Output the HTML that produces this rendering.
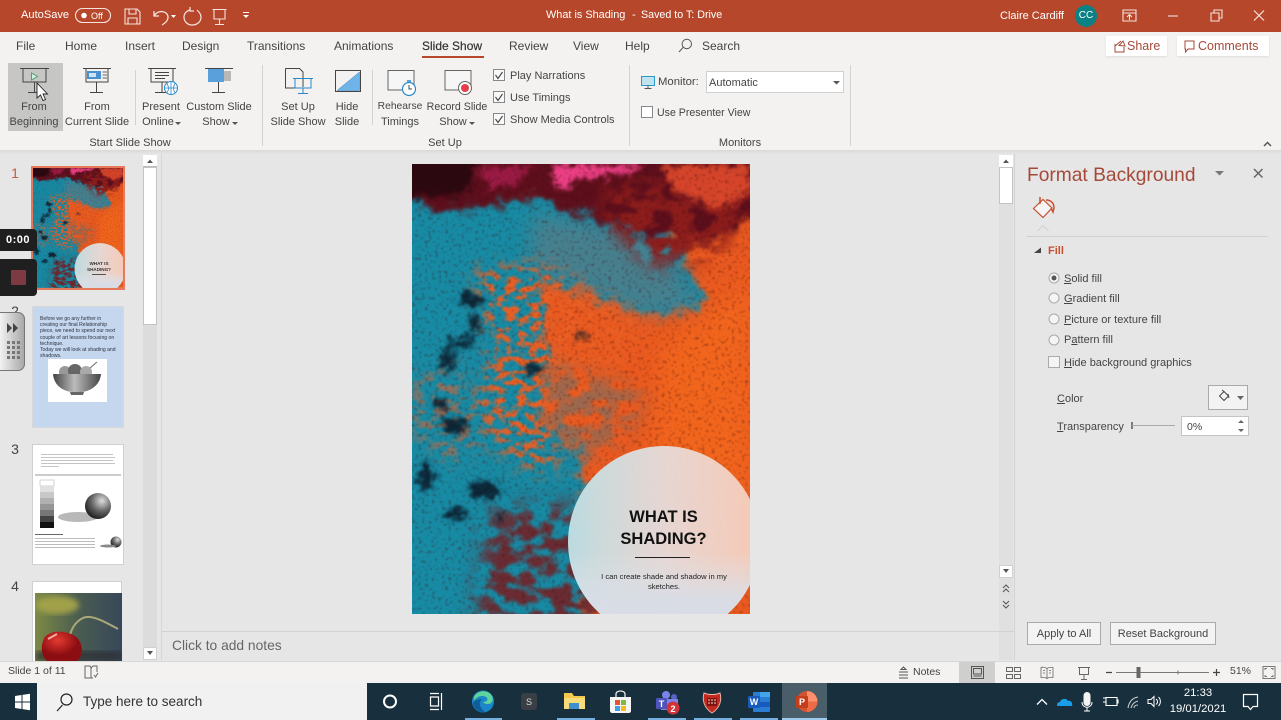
<!DOCTYPE html>
<html lang="en"><head><meta charset="utf-8"><title>What is Shading</title>
<style>
html,body{margin:0;padding:0;width:1281px;height:720px;overflow:hidden;background:#e6e6e6}
body{font-family:"Liberation Sans",sans-serif;font-size:12px;color:#444;position:relative}
.b{position:absolute}
.t{position:absolute;white-space:nowrap;line-height:14px}
.c{transform:translateX(-50%);text-align:center}
.w{color:#fff}
.r{font-size:11px}
u{text-decoration:underline;text-underline-offset:1px}
</style></head><body>

<svg width="0" height="0" style="position:absolute">
<defs>
<filter id="rough" x="-10%" y="-10%" width="120%" height="120%" color-interpolation-filters="sRGB"><feGaussianBlur in="SourceGraphic" stdDeviation="4" result="s"/><feTurbulence type="fractalNoise" baseFrequency=".06" numOctaves="3" seed="4" result="n"/><feDisplacementMap in="s" in2="n" scale="34" xChannelSelector="R" yChannelSelector="G"/><feGaussianBlur stdDeviation="1"/></filter>
<filter id="rough2" x="-30%" y="-30%" width="160%" height="160%" color-interpolation-filters="sRGB"><feGaussianBlur in="SourceGraphic" stdDeviation="3" result="s"/><feTurbulence type="fractalNoise" baseFrequency=".12" numOctaves="2" seed="11" result="n"/><feDisplacementMap in="s" in2="n" scale="16" xChannelSelector="R" yChannelSelector="G"/><feGaussianBlur stdDeviation=".8"/></filter>
<filter id="mot" x="-20%" y="-20%" width="140%" height="140%" color-interpolation-filters="sRGB"><feGaussianBlur in="SourceGraphic" stdDeviation="9" result="s"/><feTurbulence type="fractalNoise" baseFrequency=".085 .14" numOctaves="3" seed="5"/><feColorMatrix values="0 0 0 0 0 0 0 0 0 0 0 0 0 0 0 7 0 0 0 -3.3" result="m"/><feComposite in="s" in2="m" operator="in"/><feGaussianBlur stdDeviation=".9"/></filter>
<filter id="mot2" x="-20%" y="-20%" width="140%" height="140%" color-interpolation-filters="sRGB"><feGaussianBlur in="SourceGraphic" stdDeviation="10" result="s"/><feTurbulence type="fractalNoise" baseFrequency=".05 .08" numOctaves="3" seed="17"/><feColorMatrix values="0 0 0 0 0 0 0 0 0 0 0 0 0 0 0 6 0 0 0 -2.3" result="m"/><feComposite in="s" in2="m" operator="in"/><feGaussianBlur stdDeviation="1.2"/></filter>
<filter id="bl" x="-30%" y="-30%" width="160%" height="160%"><feGaussianBlur stdDeviation="10"/></filter>
<filter id="spk" x="0" y="0" width="100%" height="100%" color-interpolation-filters="sRGB"><feTurbulence type="fractalNoise" baseFrequency=".3" numOctaves="2" seed="8"/><feColorMatrix values="0 0 0 0 .25 0 0 0 0 .05 0 0 0 0 .05 5 0 0 0 -2.8"/><feGaussianBlur stdDeviation=".6"/></filter>
<clipPath id="artclip"><rect width="338" height="450"/></clipPath>
<linearGradient id="circ" x1="0" x2="1" y1="0" y2="0"><stop offset="0" stop-color="#bfdfe4"/><stop offset=".5" stop-color="#e6dad8"/><stop offset="1" stop-color="#f7ccb9"/></linearGradient>
<linearGradient id="circ2" x1="0" x2="0" y1="0" y2="1"><stop offset=".55" stop-color="#dfe3e8" stop-opacity="0"/><stop offset=".8" stop-color="#d8dde6" stop-opacity=".95"/></linearGradient>
<g id="art" clip-path="url(#artclip)">
 <rect width="338" height="450" fill="#ea5a20"/>
 <path d="M250 180L338 120V330L240 300Z" fill="#f2651f" filter="url(#bl)"/>
 <path d="M-30 30H140L250 60L295 140L245 152L130 115L135 190L125 250L170 290L172 340L175 480H-30Z" fill="#178aa4" filter="url(#rough)"/>
 <path d="M120 50L245 70L285 140L240 150L120 105Z" fill="#4f7f8c" filter="url(#bl)" opacity=".85"/>
 <path d="M60 105L130 100L250 165L180 215L140 310L100 300L60 250L80 190Z" fill="#ea5f24" filter="url(#mot)"/>
 <path d="M130 195L235 230L215 270L160 300L125 280Z" fill="#2a7d92" filter="url(#mot2)" opacity=".4"/>
 <path d="M0 215L45 200L70 280L40 300L0 270Z" fill="#df6232" filter="url(#mot)" opacity=".6"/>
 <path d="M75 345L170 340L195 470H60Z" fill="#6a2b32" filter="url(#mot2)"/>
 <path d="M-30 -20H360V45L300 75L240 75L170 50L120 35L50 45L-30 40Z" fill="#5d0f1c" filter="url(#rough)"/>
 <path d="M195 20L338 10V60L300 90L240 105L190 55Z" fill="#8c1d1c" filter="url(#mot2)"/>
 <path d="M250 0H338V30L305 45L260 25Z" fill="#e04a2c" filter="url(#rough2)" opacity=".9"/>
 <path d="M-20 -20H70L55 30L-20 35Z" fill="#2b0810" filter="url(#rough2)"/>
 <path d="M142 0H232L220 9L165 14L155 28L142 22Z" fill="#ec3f85" filter="url(#rough2)"/>
 <path d="M65 2H120L105 20L78 25Z" fill="#a51d4c" filter="url(#rough2)" opacity=".85"/>
 <rect width="338" height="450" filter="url(#spk)" opacity=".33"/>
 <g filter="url(#rough2)" fill="#0b1b2a" opacity=".9">
  <ellipse cx="58" cy="136" rx="13" ry="7"/><ellipse cx="62" cy="160" rx="6" ry="10"/><ellipse cx="50" cy="178" rx="14" ry="5"/>
  <ellipse cx="36" cy="195" rx="7" ry="13"/><ellipse cx="120" cy="205" rx="9" ry="6"/><ellipse cx="42" cy="262" rx="14" ry="9"/>
  <ellipse cx="28" cy="240" rx="8" ry="6"/><ellipse cx="14" cy="313" rx="8" ry="14"/><ellipse cx="72" cy="326" rx="16" ry="9"/>
  <ellipse cx="44" cy="350" rx="11" ry="6"/><ellipse cx="88" cy="352" rx="5" ry="4"/><ellipse cx="170" cy="172" rx="7" ry="3"/>
 </g>
 <circle cx="252" cy="378" r="96" fill="url(#circ)" opacity=".97"/>
 <circle cx="252" cy="378" r="96" fill="url(#circ2)"/>
</g>
</defs></svg>

<!-- title bar -->
<div class="b" style="left:0;top:0;width:1281px;height:32px;background:#b7472a"></div>
<div class="t w" style="left:21px;top:8px;font-size:11.1px">AutoSave</div>
<div class="t w" style="left:91px;top:9px;font-size:9px">Off</div>
<div class="t w" style="left:546px;top:8px;font-size:10.9px">What is Shading</div>
<div class="t w" style="left:632px;top:8px;font-size:11px">-</div>
<div class="t w" style="left:641px;top:8px;font-size:10.7px">Saved to T: Drive</div>
<div class="t w" style="left:1000px;top:9px;font-size:11px">Claire Cardiff</div>
<div class="b" style="left:1075px;top:5px;width:22px;height:22px;border-radius:50%;background:#0b8085"></div>
<div class="t w c" style="left:1086px;top:9px;font-size:10px">CC</div>

<!-- ribbon -->
<div class="b" style="left:0;top:32px;width:1281px;height:118px;background:#f3f2f1"></div>
<div class="b" style="left:0;top:150px;width:1281px;height:4px;background:linear-gradient(#d9d9d9,#e6e6e6)"></div>
<div class="t" style="left:16px;top:39px;font-size:12px">File</div>
<div class="t" style="left:65px;top:39px;font-size:12px">Home</div>
<div class="t" style="left:125px;top:39px;font-size:12px">Insert</div>
<div class="t" style="left:182px;top:39px;font-size:12px">Design</div>
<div class="t" style="left:247px;top:39px;font-size:12px">Transitions</div>
<div class="t" style="left:334px;top:39px;font-size:12px">Animations</div>
<div class="t" style="left:422px;top:39px;font-size:12px;color:#333;-webkit-text-stroke:.2px #333">Slide Show</div>
<div class="b" style="left:422px;top:56px;width:62px;height:2px;background:#b7472a"></div>
<div class="t" style="left:509px;top:39px;font-size:12px">Review</div>
<div class="t" style="left:573px;top:39px;font-size:12px">View</div>
<div class="t" style="left:625px;top:39px;font-size:12px">Help</div>
<div class="t" style="left:702px;top:39px;font-size:12px">Search</div>

<div class="b" style="left:1106px;top:36px;width:61px;height:20px;background:#fff;box-shadow:0 1px 2px #ddd"></div>
<div class="t" style="left:1127px;top:39px;font-size:12.5px;color:#a5493a">Share</div>
<div class="b" style="left:1177px;top:36px;width:92px;height:20px;background:#fff;box-shadow:0 1px 2px #ddd"></div>
<div class="t" style="left:1198px;top:39px;font-size:12.5px;color:#a5493a">Comments</div>

<div class="b" style="left:8px;top:63px;width:55px;height:68px;background:#c6c6c4"></div>

<div class="t r c" style="left:34px;top:100px">From</div><div class="t r c" style="left:34px;top:115px">Beginning</div>
<div class="t r c" style="left:97px;top:100px">From</div><div class="t r c" style="left:97px;top:115px">Current Slide</div>
<div class="t r c" style="left:161px;top:100px">Present</div><div class="t r c" style="left:158px;top:115px">Online</div>
<div class="t r c" style="left:219px;top:100px">Custom Slide</div><div class="t r c" style="left:216px;top:115px">Show</div>
<div class="t r c" style="left:298px;top:100px">Set Up</div><div class="t r c" style="left:298px;top:115px">Slide Show</div>
<div class="t r c" style="left:347px;top:100px">Hide</div><div class="t r c" style="left:347px;top:115px">Slide</div>
<div class="t r c" style="left:400px;top:100px;font-size:10.3px">Rehearse</div><div class="t r c" style="left:400px;top:115px">Timings</div>
<div class="t r c" style="left:457px;top:100px;font-size:10.6px">Record Slide</div><div class="t r c" style="left:453px;top:115px">Show</div>
<div class="t r" style="left:510px;top:69px">Play Narrations</div>
<div class="t r" style="left:510px;top:91px">Use Timings</div>
<div class="t r" style="left:510px;top:113px">Show Media Controls</div>
<div class="t r" style="left:658px;top:75px;font-size:11.3px">Monitor:</div>
<div class="b" style="left:706px;top:71px;width:136px;height:20px;background:#fff;border:1px solid #d0d0d0"></div>
<div class="t r" style="left:709px;top:76px">Automatic</div>
<div class="t r" style="left:657px;top:106px;font-size:10.6px">Use Presenter View</div>
<div class="t r c" style="left:130px;top:136px">Start Slide Show</div>
<div class="t r c" style="left:445px;top:136px">Set Up</div>
<div class="t r c" style="left:740px;top:136px">Monitors</div>

<!-- thumbnail pane -->
<div class="b" style="left:143px;top:155px;width:14px;height:505px;background:#dcdcdc"></div>
<div class="b" style="left:143px;top:155px;width:14px;height:12px;background:#fff;border-bottom:1px solid #bbb;box-sizing:border-box"></div>
<div class="b" style="left:143px;top:167px;width:14px;height:158px;background:#fff;border:1px solid #c4c4c4;box-sizing:border-box"></div>
<div class="b" style="left:143px;top:647px;width:14px;height:13px;background:#fff;border:1px solid #d0d0d0;box-sizing:border-box"></div>
<div class="b" style="left:161px;top:154px;width:1px;height:506px;background:#d6d6d6"></div>

<div class="t c" style="left:15px;top:166px;font-size:14px;color:#c9593f">1</div>
<div class="t c" style="left:15px;top:304px;font-size:14px">2</div>
<div class="t c" style="left:15px;top:442px;font-size:14px">3</div>
<div class="t c" style="left:15px;top:579px;font-size:14px">4</div>

<div class="b" style="left:31px;top:166px;width:90px;height:120px;border:2px solid #e87a5c;background:#fff"></div>
<svg class="b" style="left:33px;top:168px" width="90" height="120" viewBox="0 0 338 450"><use href="#art"/></svg>
<div class="t c" style="left:99px;top:261px;font-size:4.6px;line-height:5.6px;font-weight:bold;color:#333">WHAT IS<br>SHADING?</div>
<div class="b" style="left:92px;top:274px;width:14px;height:1px;background:#555"></div>

<div class="b" style="left:32px;top:306px;width:90px;height:120px;background:#c5d6ef;border:1px solid #d8d8d8"></div>
<div class="t" style="left:40px;top:316px;font-size:5.1px;line-height:6.2px;color:#2c3440">Before we go any further in<br>creating our final Relationship<br>piece, we need to spend our next<br>couple of art lessons focusing on<br>technique.<br>Today we will look at shading and<br>shadows.</div>
<div class="b" style="left:48px;top:359px;width:59px;height:43px;background:#fff"></div>
<svg class="b" style="left:48px;top:359px" width="59" height="43" viewBox="0 0 59 43">
 <defs><linearGradient id="bowl" x1="0" x2="1"><stop offset="0" stop-color="#444"/><stop offset=".45" stop-color="#bbb"/><stop offset="1" stop-color="#444"/></linearGradient></defs>
 <circle cx="17" cy="13" r="6" fill="#999"/><circle cx="27" cy="12" r="7" fill="#666"/><circle cx="38" cy="13" r="6" fill="#aaa"/><path d="M42 9L49 3" stroke="#666"/>
 <path d="M5 15H53C52 26 43 32 34 33H24C14 32 6 26 5 15Z" fill="url(#bowl)"/><path d="M22 33H36L35 36H23Z" fill="#666"/>
</svg>

<div class="b" style="left:32px;top:444px;width:90px;height:119px;background:#fff;border:1px solid #d0d0d0"></div>
<svg class="b" style="left:33px;top:445px" width="90" height="119" viewBox="0 0 90 119">
 <defs><radialGradient id="sph" cx=".65" cy=".3" r=".8"><stop offset="0" stop-color="#ddd"/><stop offset=".5" stop-color="#666"/><stop offset="1" stop-color="#111"/></radialGradient></defs>
 <g fill="#c4c4c4"><rect x="8" y="9" width="72" height="1"/><rect x="8" y="12" width="74" height="1"/><rect x="8" y="15" width="72" height="1"/><rect x="8" y="18" width="74" height="1"/><rect x="8" y="21" width="18" height="1"/></g>
 <rect x="2" y="29" width="86" height="2" fill="#ccc"/>
 <rect x="7" y="35" width="14" height="6" fill="#fff" stroke="#999" stroke-width=".4"/><rect x="7" y="41" width="14" height="6" fill="#e0e0e0"/><rect x="7" y="47" width="14" height="6" fill="#c8c8c8"/><rect x="7" y="53" width="14" height="6" fill="#b0b0b0"/><rect x="7" y="59" width="14" height="6" fill="#969696"/><rect x="7" y="65" width="14" height="6" fill="#777"/><rect x="7" y="71" width="14" height="6" fill="#444"/><rect x="7" y="77" width="14" height="6" fill="#111"/>
 <ellipse cx="45" cy="72" rx="20" ry="5" fill="#888" opacity=".6"/>
 <circle cx="65" cy="61" r="13" fill="url(#sph)"/>
 <g fill="#bbb"><rect x="2" y="89" width="28" height="1" fill="#666"/><rect x="2" y="93" width="60" height="1"/><rect x="2" y="96" width="60" height="1"/><rect x="2" y="99" width="60" height="1"/><rect x="2" y="102" width="60" height="1"/></g>
 <circle cx="83" cy="97" r="5.5" fill="url(#sph)"/><ellipse cx="75" cy="101" rx="8" ry="1.5" fill="#888"/>
</svg>

<div class="b" style="left:32px;top:581px;width:90px;height:80px;background:#fff;border:1px solid #d0d0d0;border-bottom:0;box-sizing:border-box"></div>
<svg class="b" style="left:35px;top:593px" width="87" height="68" viewBox="0 0 87 68">
 <defs><linearGradient id="ch" x1="0" x2="1"><stop offset="0" stop-color="#7d8a45"/><stop offset=".5" stop-color="#4a5c50"/><stop offset="1" stop-color="#37485a"/></linearGradient><filter id="b2"><feGaussianBlur stdDeviation="3"/></filter><radialGradient id="cr" cx=".4" cy=".3"><stop offset="0" stop-color="#e53a30"/><stop offset="1" stop-color="#8c0d12"/></radialGradient></defs>
 <rect width="87" height="68" fill="url(#ch)"/><ellipse cx="22" cy="12" rx="22" ry="9" fill="#a1a14a" filter="url(#b2)"/><rect y="58" width="87" height="10" fill="#2c2b33" opacity=".7" filter="url(#b2)"/>
 <path d="M35 42C38 30 47 23 55 24C63 25 72 30 83 36" fill="none" stroke="#a8a878" stroke-width="2"/>
 <path d="M8 48C10 39 24 36 36 41C48 45 50 62 42 68H12C6 62 6 54 8 48Z" fill="url(#cr)"/>
 <path d="M13 46L22 41" stroke="#f2aaa0" stroke-width="2"/>
</svg>

<!-- recording overlay -->
<div class="b" style="left:0;top:229px;width:37px;height:22px;background:#1f1f1f;border-radius:0 4px 4px 0"></div>
<div class="t w c" style="left:18px;top:233px;font-size:11px;font-weight:bold;letter-spacing:.5px">0:00</div>
<div class="b" style="left:0;top:259px;width:37px;height:37px;background:#201f1f;border-radius:0 4px 4px 0"></div>
<div class="b" style="left:11px;top:270px;width:15px;height:15px;background:#7d3a42;border-radius:1px"></div>
<div class="b" style="left:-2px;top:312px;width:27px;height:59px;background:linear-gradient(90deg,#f5f5f5,#a8a8a8);border:1px solid #777;border-radius:0 7px 7px 0;box-sizing:border-box"></div>

<!-- slide -->
<svg class="b" style="left:411.5px;top:164px" width="338" height="450" viewBox="0 0 338 450"><use href="#art"/></svg>
<div class="t c" style="left:663.5px;top:507px;font-size:16.5px;line-height:21.5px;font-weight:bold;color:#111">WHAT IS<br>SHADING?</div>
<div class="b" style="left:635px;top:557px;width:55px;height:1px;background:#222"></div>
<div class="t c" style="left:664px;top:572px;font-size:7.6px;line-height:9.5px;color:#222">I can create shade and shadow in my<br>sketches.</div>

<!-- main scrollbar -->
<div class="b" style="left:999px;top:155px;width:14px;height:505px;background:#e0e0e0"></div>
<div class="b" style="left:999px;top:155px;width:14px;height:12px;background:#fff"></div>
<div class="b" style="left:999px;top:167px;width:14px;height:37px;background:#fff;border:1px solid #c4c4c4;box-sizing:border-box"></div>
<div class="b" style="left:999px;top:565px;width:14px;height:13px;background:#fff;border:1px solid #d0d0d0;box-sizing:border-box"></div>
<div class="b" style="left:1014px;top:154px;width:1px;height:506px;background:#d2d2d2"></div>

<!-- notes -->
<div class="b" style="left:162px;top:631px;width:852px;height:1px;background:#d2d2d2"></div>
<div class="t" style="left:172px;top:639px;font-size:13.8px;color:#666">Click to add notes</div>

<!-- format pane -->
<div class="t" style="left:1027px;top:164px;font-size:19.2px;line-height:24px;color:#a5493a">Format Background</div>
<div class="b" style="left:1027px;top:236px;width:241px;height:1px;background:#d0d0d0"></div>
<div class="t" style="left:1048px;top:244px;font-size:11px;font-weight:bold;color:#c8502f">Fill</div>
<div class="t" style="left:1064px;top:272px;font-size:11px"><u>S</u>olid fill</div>
<div class="t" style="left:1064px;top:292px;font-size:11px"><u>G</u>radient fill</div>
<div class="t" style="left:1064px;top:313px;font-size:11px"><u>P</u>icture or texture fill</div>
<div class="t" style="left:1064px;top:333px;font-size:11px">P<u>a</u>ttern fill</div>
<div class="t" style="left:1064px;top:356px;font-size:11px"><u>H</u>ide background graphics</div>
<div class="t" style="left:1057px;top:392px;font-size:11px"><u>C</u>olor</div>
<div class="t" style="left:1057px;top:420px;font-size:11px"><u>T</u>ransparency</div>
<div class="b" style="left:1208px;top:385px;width:40px;height:25px;background:#f3f3f3;border:1px solid #aaa;box-sizing:border-box"></div>
<div class="b" style="left:1181px;top:416px;width:68px;height:20px;background:#fff;border:1px solid #c4c4c4;box-sizing:border-box"></div>
<div class="t" style="left:1187px;top:420px;font-size:10.5px">0%</div>
<div class="b" style="left:1027px;top:622px;width:74px;height:23px;background:#f3f3f3;border:1px solid #aaa;box-sizing:border-box"></div>
<div class="t c" style="left:1064px;top:627px;font-size:11px">Apply to All</div>
<div class="b" style="left:1110px;top:622px;width:106px;height:23px;background:#f3f3f3;border:1px solid #aaa;box-sizing:border-box"></div>
<div class="t c" style="left:1163px;top:627px;font-size:11px">Reset Background</div>

<!-- status bar -->
<div class="b" style="left:0;top:661px;width:1281px;height:22px;background:#f3f2f1;border-top:1px solid #d8d8d8;box-sizing:border-box"></div>
<div class="t" style="left:8px;top:664px;font-size:10.5px">Slide 1 of 11</div>
<div class="t" style="left:913px;top:665px;font-size:10.5px">Notes</div>
<div class="b" style="left:959px;top:662px;width:36px;height:21px;background:#cfcfcd"></div>
<div class="t" style="left:1230px;top:664px;font-size:10.5px">51%</div>

<!-- taskbar -->
<div class="b" style="left:0;top:683px;width:1281px;height:37px;background:#182f3d"></div>
<div class="b" style="left:37px;top:683px;width:330px;height:37px;background:#f1f1f1"></div>
<div class="t" style="left:83px;top:695px;font-size:13.5px;color:#333">Type here to search</div>
<div class="b" style="left:782px;top:683px;width:45px;height:37px;background:#4a5e6a"></div>
<div class="b" style="left:465px;top:718px;width:37px;height:2px;background:#76b0e0"></div>
<div class="b" style="left:557px;top:718px;width:38px;height:2px;background:#76b0e0"></div>
<div class="b" style="left:648px;top:718px;width:38px;height:2px;background:#76b0e0"></div>
<div class="b" style="left:694px;top:718px;width:38px;height:2px;background:#76b0e0"></div>
<div class="b" style="left:740px;top:718px;width:38px;height:2px;background:#76b0e0"></div>
<div class="b" style="left:782px;top:718px;width:45px;height:2px;background:#9ccbee"></div>
<div class="t w c" style="left:1198px;top:686px;font-size:11.3px">21:33</div>
<div class="t w c" style="left:1198px;top:702px;font-size:11.3px">19/01/2021</div>

<!-- icons -->
<svg class="b" style="left:0;top:0;pointer-events:none" width="1281" height="720" viewBox="0 0 1281 720" fill="none">
 <g stroke="#fff" stroke-opacity=".85" stroke-width="1.1">
  <rect x="75.5" y="8.5" width="35" height="14" rx="7"/>
  <path d="M125 9H137L140 12V24H125ZM129 9V14H136V9M128 24V18H137V24"/>
  <path d="M154 11V16H159M154 16C158 9 168 11 168 17C168 21 165 23 162 25" stroke-width="1.3"/>
  <path d="M190 10C186 11 184 14 184 17C184 22 188 25 192 25C197 25 201 22 201 17C201 14 199 12 197 10M190 7L190 11L194 11" stroke-width="1.2"/>
  <path d="M212.5 9.5H226.5M214 9.5V19H225V9.5M219.5 19V24M215 24.5H224"/>
  <path d="M1123 10H1136V21H1123ZM1123 13H1136M1129.5 20V15M1127 17L1129.5 14.5L1132 17"/>
  <path d="M1168 16H1178"/>
  <path d="M1211 13H1219V21H1211ZM1214 13V10H1222V18H1219"/>
  <path d="M1254 10.5L1264 20.5M1264 10.5L1254 20.5" stroke-width="1.2"/>
 </g>
 <circle cx="84" cy="15.5" r="2.8" fill="#fff"/>
 <path d="M171 15H176L173.5 18Z M243 15H249L246 18Z" fill="#fff"/><path d="M243 12.5H249" stroke="#fff"/>
 <path d="M679 52L683.5 47M691.5 44A4.7 4.7 0 1 1 682.1 44A4.7 4.7 0 1 1 691.5 44Z" stroke="#555" stroke-width="1"/>
 <path d="M1115 44V52H1124V47M1115 46L1121 41M1119 45.5L1123 41L1125 46Z" stroke="#a5493a" stroke-width="1"/>
 <path d="M1185 41H1194V49H1188L1185.5 52V49H1185Z" stroke="#a5493a" stroke-width="1"/>
 <path d="M262.5 65V146M629.5 65V146M850.5 65V146M135.5 70V125M372.5 70V125" stroke="#d2d2d2"/>
 <g stroke="#444" stroke-width="1">
  <path d="M20 68.5H49M23 68.5V82H46V68.5M34.5 82V92M28 92.5H41"/>
  <path d="M83 68.5H111M86 68.5V82H108V68.5M96.5 82V92M90 92.5H103"/>
  <path d="M148 68.5H176M151 68.5V82H173V68.5M162 82V92M155 92.5H168"/>
  <path d="M205 68.5H233M218.5 82V92M212 92.5H225"/>
  <path d="M155 72.5H169M155 75.5H169M155 78.5H165"/>
  <path d="M285.5 68.5H299.5L303 72V87M285.5 68.5V88H297"/>
  <path d="M293 78.5H313M295 78.5V88H311V78.5M303 88V93M298 93.5H308" stroke="#2b88c9"/>
  <path d="M335.5 70.5H360.5V91.5H335.5Z"/>
  <path d="M388 70.5H414V90H388Z M445 70.5H471V90H445Z" fill="#f6f6f6" stroke="#666"/>
 </g>
 <path d="M31.5 73V80L37.5 76.5Z" stroke="#4fa26c" fill="#d9ecdf"/>
 <path d="M87 71H101V79H87Z" fill="#4a90d0" /><path d="M102.5 72H107M102.5 75H107M102.5 78H107" stroke="#666"/>
 <path d="M89 73H96V77H89Z" fill="#cfe4f6"/>
 <rect x="208" y="69" width="16" height="13" fill="#5aa0da"/><rect x="224" y="71" width="7" height="10" fill="#b8b8b8"/>
 <circle cx="171" cy="88" r="6.5" fill="#fff" stroke="#2b88c9"/><path d="M164.5 88H177.5M171 81.5V94.5M167 83.5C169 87 169 90 167 92.5M175 83.5C173 87 173 90 175 92.5" stroke="#2b88c9" stroke-width=".8"/>
 <path d="M337 90.5L359.5 72V90.5Z" fill="#6fb4e8" stroke="#3a7fb8" stroke-width=".5"/>
 <circle cx="409" cy="89" r="6.5" fill="#fff" stroke="#2b88c9" stroke-width="1.2"/><path d="M409 85V89H412" stroke="#444"/><path d="M407 81H411" stroke="#2b88c9" stroke-width="1.5"/>
 <circle cx="465" cy="88" r="6.5" fill="#fff" stroke="#666"/><circle cx="465" cy="88" r="4" fill="#e5404a"/>
 <path d="M175 122H181L178 125Z M232 122H238L235 125Z M469 122H475L472 125Z M833 81H840L836.5 84.5Z" fill="#555"/>
 <g stroke="#888" fill="#f8f8f8"><rect x="493.5" y="69.5" width="11" height="11"/><rect x="493.5" y="91.5" width="11" height="11"/><rect x="493.5" y="113.5" width="11" height="11"/><rect x="641.5" y="106.5" width="11" height="11" fill="#fff"/></g>
 <path d="M495.5 75L498 78.5L502.5 72M495.5 97L498 100.5L502.5 94M495.5 119L498 122.5L502.5 116" stroke="#444" stroke-width="1.1"/>
 <path d="M641.5 76.5H654.5V85.5H641.5Z" fill="#bfe3ef" stroke="#2b9ac9"/><path d="M648 85.5V88M644.5 88.5H651.5" stroke="#555"/>
 <path d="M1264 146L1267.5 142.5L1271 146" stroke="#555" stroke-width="1.5"/>
 <path d="M147 163H153L150 159.5Z M147 651H153L150 655Z M1003 163H1009L1006 159.5Z M1003 569H1009L1006 573Z" fill="#555"/>
 <path d="M1003 588L1006 585L1009 588M1003 592L1006 589L1009 592M1003 601L1006 604L1009 601M1003 605L1006 608L1009 605" stroke="#555"/>
 <path d="M37 83V98L40.5 95L43 100.5L45.5 99.5L43 94H47.5Z" fill="#fff" stroke="#222" stroke-width=".9"/>
 <path d="M7 323V333L12 328Z M13 323V333L18 328Z" fill="#444"/>
 <g fill="#777"><rect x="7" y="341" width="3" height="3"/><rect x="12" y="341" width="3" height="3"/><rect x="17" y="341" width="3" height="3"/><rect x="7" y="346" width="3" height="3"/><rect x="12" y="346" width="3" height="3"/><rect x="17" y="346" width="3" height="3"/><rect x="7" y="351" width="3" height="3"/><rect x="12" y="351" width="3" height="3"/><rect x="17" y="351" width="3" height="3"/><rect x="7" y="356" width="3" height="3"/><rect x="12" y="356" width="3" height="3"/><rect x="17" y="356" width="3" height="3"/></g>
 <path d="M1215 171H1224L1219.5 175.5Z" fill="#777"/>
 <path d="M1254 169L1262.5 177.5M1262.5 169L1254 177.5" stroke="#666" stroke-width="1.5"/>
 <path d="M1033.5 208.5L1043 199.5L1052 208L1043 217.5Z" stroke="#c8502f" stroke-width="1.2" fill="#f5f5f5"/>
 <path d="M1040 197V204M1046 200C1051 200 1054 203 1054 208L1053 212L1051 208" stroke="#c8502f" stroke-width="1.5"/>
 <path d="M1037.5 231L1043 225.5L1048.5 231" stroke="#d0d0d0" fill="#e6e6e6"/>
 <path d="M1034 253H1041V247.5Z" fill="#444"/>
 <g stroke="#aaa" fill="#f5f5f5"><circle cx="1054" cy="278" r="5"/><circle cx="1054" cy="298" r="5"/><circle cx="1054" cy="319" r="5"/><circle cx="1054" cy="340" r="5"/><rect x="1048.5" y="356.5" width="11" height="11"/></g>
 <circle cx="1054" cy="278" r="2.5" fill="#555"/>
 <path d="M1219.5 396L1224 391.5L1228.5 396L1224 400.5ZM1224 391.5L1222 390M1228 394L1229 398" stroke="#444"/>
 <path d="M1237 396H1244L1240.5 400Z" fill="#666"/>
 <path d="M1132 422V429" stroke="#555" stroke-width="1.5"/><path d="M1132 425.5H1175" stroke="#aaa"/>
 <path d="M1238 423L1241 420L1244 423Z M1238 429L1241 432L1244 429Z" fill="#666"/>
 <path d="M85 666H90L91 668V678H85ZM91 668L93 666H97V672M91 678H93M94 675L95.5 677L98 673" stroke="#666"/>
 <path d="M899 672H908M899 675H908M899 678H908M901 669.5L903.5 667L906 669.5Z" stroke="#555"/>
 <path d="M971.5 666.5H983.5V678.5H971.5ZM973.5 668.5H981.5V674H973.5ZM973.5 676H981.5" stroke="#555"/>
 <path d="M1006.5 667.5H1012.5V671.5H1006.5ZM1014.5 667.5H1020.5V671.5H1014.5ZM1006.5 674.5H1012.5V678.5H1006.5ZM1014.5 674.5H1020.5V678.5H1014.5Z" stroke="#666"/>
 <path d="M1047 668.5C1045 667 1042 667 1041 667.5V677.5C1043 677 1045 677 1047 678.5C1049 677 1051 677 1053 677.5V667.5C1051 667 1049 667 1047 668.5ZM1047 668.5V678.5M1043 670.5H1045M1043 673H1045M1049 670.5H1051M1049 673H1051" stroke="#666" stroke-width=".8"/>
 <path d="M1078 667.5H1090M1079.5 667.5V674.5H1088.5V667.5M1084 674.5V679M1081 679.5H1087" stroke="#666"/>
 <path d="M1116 672.5H1209M1178 670.5V674.5" stroke="#777"/>
 <path d="M1106 672.5H1112M1213 672.5H1220M1216.5 669V676" stroke="#444" stroke-width="1.2"/>
 <rect x="1136.5" y="667" width="4" height="11" fill="#666"/>
 <path d="M1263 666.5H1275V678.5H1263ZM1265 670V668.5H1267M1271 668.5H1273V670M1273 675V676.5H1271M1267 676.5H1265V675" stroke="#777"/>
 <path d="M15 696L21.5 695V701.5H15ZM22.5 694.9L30 693.8V701.5H22.5ZM15 702.5H21.5V709L15 708ZM22.5 702.5H30V710.2L22.5 709.1Z" fill="#fff"/>
 <path d="M57 709L62.5 703M72 697.5A5.5 5.5 0 1 1 61 697.5A5.5 5.5 0 1 1 72 697.5Z" transform="translate(0 2)" stroke="#222" stroke-width="1.2"/>
 <circle cx="390" cy="701.5" r="6" stroke="#fff" stroke-width="2"/>
 <path d="M430.5 697H438.5V706H430.5ZM430 693.5H439M430 709.5H439M441.5 693V710" stroke="#fff" stroke-width="1.2"/>
 <circle cx="483" cy="701.5" r="11" fill="#1b86c8"/><path d="M474 697C477 690 488 689 492 696C494 700 492 704 488 704C485 704 483 703 483 702C487 702 489 699 486 697C482 695 477 696 474 701Z" fill="#5ed39b"/><path d="M473 703C473 708 479 713 485 712C480 708 478 703 482 699C478 699 474 700 473 703Z" fill="#0f5e9c"/>
 <rect x="521" y="693" width="16" height="17" rx="3" fill="#3a3f45"/>
 <path d="M564 693H572L574 696H585V709H564Z" fill="#f2c94f"/><path d="M564 698H585V709H564Z" fill="#f8dc7a"/><rect x="569" y="703" width="10" height="6" fill="#3f8fce"/>
 <path d="M610 697H631V711C631 712 630 713 629 713H612C611 713 610 712 610 711Z" fill="#f5f5f5"/><path d="M616 697V694C616 690 625 690 625 694V697" stroke="#eee" stroke-width="1.3"/>
 <rect x="615" y="700" width="5" height="5" fill="#e8532f"/><rect x="621" y="700" width="5" height="5" fill="#7fbb3d"/><rect x="615" y="706" width="5" height="5" fill="#3aa3e8"/><rect x="621" y="706" width="5" height="5" fill="#f7bb1e"/>
 <circle cx="666" cy="695" r="4" fill="#7b83eb"/><circle cx="674" cy="697" r="3" fill="#5b63c6"/><path d="M661 699H678V710H661Z" fill="#7b83eb"/><rect x="656" y="698" width="11" height="11" rx="1" fill="#4b53bc"/><circle cx="673" cy="708" r="6.5" fill="#d13438"/>
 <path d="M704 693C708 695 716 695 720 693C722 700 720 708 712 713C704 708 702 700 704 693Z" fill="#c3281f" stroke="#e6b8a8"/><path d="M707 698H717V706H707Z" fill="#7d1410"/><path d="M708 700H716M708 703H716" stroke="#f2d6c9" stroke-dasharray="2 1"/>
 <rect x="753" y="692" width="17" height="20" rx="1" fill="#2b7cd3"/><rect x="760" y="692" width="10" height="5" fill="#41a5ee"/><rect x="760" y="702" width="10" height="5" fill="#185abd"/><rect x="748" y="696" width="12" height="12" rx="1" fill="#185abd"/>
 <circle cx="807" cy="701.5" r="10.5" fill="#d35230"/><path d="M807 691A10.5 10.5 0 0 1 817.5 701.5H807Z" fill="#ff8f6b"/><path d="M817.5 701.5A10.5 10.5 0 0 1 807 712V701.5Z" fill="#ed6c47"/><rect x="796" y="696" width="12" height="12" rx="1" fill="#c43e1c"/>
 <path d="M1037 704.5L1042 699.5L1047 704.5" stroke="#fff" stroke-width="1.3"/>
 <path d="M1058 706C1056 706 1057 702 1060 702C1061 698 1067 698 1068 701C1071 700 1073 703 1072 706Z" fill="#1b9ee8"/>
 <rect x="1083.5" y="692" width="7" height="14" rx="3.5" fill="#f3f3f3"/><path d="M1082 702C1082 709 1092 709 1092 702M1087 707V711M1084 711H1090" stroke="#fff"/>
 <path d="M1106 697.5H1117V705.5H1106ZM1103 698H1106M1103 702H1106M1117 700H1118V703H1117" stroke="#fff" stroke-width="1.1"/>
 <path d="M1128 708C1129 702 1132 698 1138 697M1131 708C1132 704 1134 702 1138 701M1134 708C1134 706 1136 705 1138 705" stroke="#ccc" stroke-width="1.1"/>
 <path d="M1148 699.5H1151L1154 696.5V706.5L1151 703.5H1148ZM1156 699C1158 700.5 1158 703 1156 704.5M1158.5 697C1161 699.5 1161 703.5 1158.5 706" stroke="#fff" stroke-width="1"/>
 <path d="M1243.5 694.5H1257.5V706.5H1253L1250.5 709.5L1248 706.5H1243.5Z" stroke="#fff" stroke-width="1.2"/>
</svg>
<div class="t w c" style="left:529px;top:695px;font-size:9px;color:#ddd">S</div>
<div class="t w c" style="left:673px;top:702px;font-size:9px;font-weight:bold">2</div>
<div class="t w c" style="left:661.5px;top:697px;font-size:9px;font-weight:bold">T</div>
<div class="t w c" style="left:754px;top:695px;font-size:9px;font-weight:bold">W</div>
<div class="t w c" style="left:802px;top:695px;font-size:9px;font-weight:bold">P</div>
</body></html>
